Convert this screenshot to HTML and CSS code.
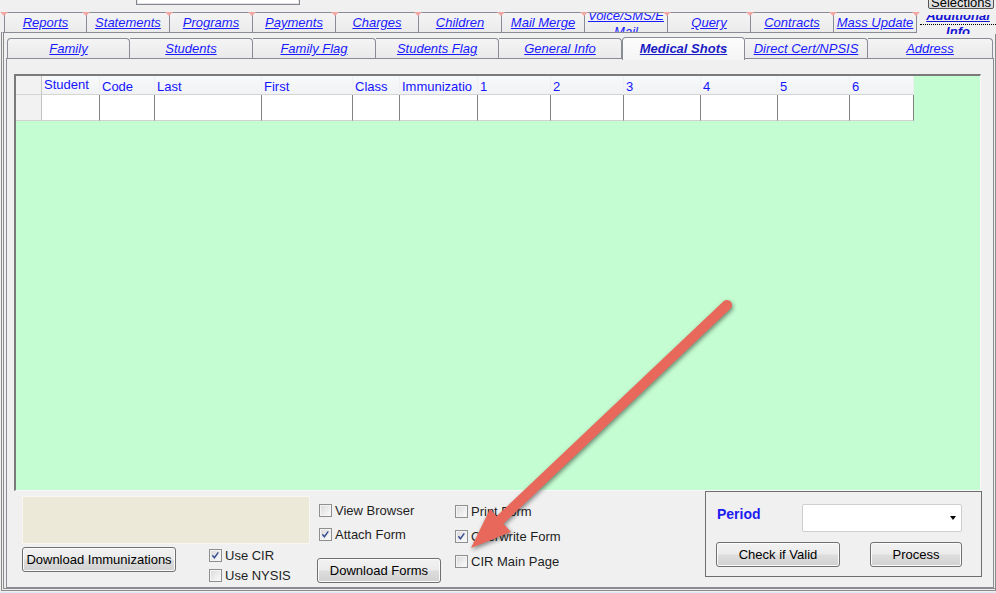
FILE: index.html
```html
<!DOCTYPE html>
<html lang="en">
<head>
    <meta charset="UTF-8">
    <meta name="viewport" content="width=device-width, initial-scale=1.0">
    <title>Medical Shots</title>

    <link rel="stylesheet" href="styles.css">
</head>
<body>

<div class="topbar">
    <div class="search"></div>
    <button class="sel-btn">Selections</button>
</div>

<div class="tabs1">
    <span class="t1 first">Reports</span>
    <span class="t1">Statements</span>
    <span class="t1">Programs</span>
    <span class="t1">Payments</span>
    <span class="t1">Charges</span>
    <span class="t1">Children</span>
    <span class="t1">Mail Merge</span>
    <span class="t1"><span class="clip"><span class="lines">Voice/SMS/E<br>Mail</span></span></span>
    <span class="t1">Query</span>
    <span class="t1">Contracts</span>
    <span class="t1">Mass Update</span>
    <span class="t1 active"><span class="focus"><span class="lines">Additional<br>Info</span></span></span>
</div>

<div class="frame">
    <div class="tabs2">
        <span class="t2 first">Family</span>
        <span class="t2">Students</span>
        <span class="t2">Family Flag</span>
        <span class="t2">Students Flag</span>
        <span class="t2">General Info</span>
        <span class="t2 active">Medical Shots</span>
        <span class="t2">Direct Cert/NPSIS</span>
        <span class="t2 last">Address</span>
    </div>

    <div class="panel">
        <div class="grid-area">
            <div class="grid">
                <div class="hd rh"></div>
                <div class="hd hi">Student</div>
                <div class="hd">Code</div>
                <div class="hd">Last</div>
                <div class="hd">First</div>
                <div class="hd">Class</div>
                <div class="hd">Immunizatio</div>
                <div class="hd">1</div>
                <div class="hd">2</div>
                <div class="hd">3</div>
                <div class="hd">4</div>
                <div class="hd">5</div>
                <div class="hd">6</div>

                <div class="cell rh"></div>
                <div class="cell"></div>
                <div class="cell"></div>
                <div class="cell"></div>
                <div class="cell"></div>
                <div class="cell"></div>
                <div class="cell"></div>
                <div class="cell"></div>
                <div class="cell"></div>
                <div class="cell"></div>
                <div class="cell"></div>
                <div class="cell"></div>
                <div class="cell"></div>
            </div>
        </div>

        <div class="bottom">
            <div class="col-a">
                <div class="memo"></div>
                <div class="col-a-row">
                    <button class="btn btn-imm">Download Immunizations</button>
                    <div class="checks">
                        <label class="chk"><span class="box on"><svg viewBox="0 0 13 13"><path d="M2.8 6.2 L5.2 9.2 L9.8 2.8"/></svg></span>Use CIR</label>
                        <label class="chk"><span class="box"></span>Use NYSIS</label>
                    </div>
                </div>
            </div>

            <div class="col-b">
                <label class="chk"><span class="box"></span>View Browser</label>
                <label class="chk"><span class="box on"><svg viewBox="0 0 13 13"><path d="M2.8 6.2 L5.2 9.2 L9.8 2.8"/></svg></span>Attach Form</label>
                <button class="btn btn-forms">Download Forms</button>
            </div>

            <div class="col-c">
                <label class="chk"><span class="box"></span>Print Form</label>
                <label class="chk"><span class="box on"><svg viewBox="0 0 13 13"><path d="M2.8 6.2 L5.2 9.2 L9.8 2.8"/></svg></span>Overwrite Form</label>
                <label class="chk"><span class="box"></span>CIR Main Page</label>
            </div>

            <div class="groupbox">
                <div class="period-row">
                    <span class="period">Period</span>
                    <div class="combo"><span class="caret"></span></div>
                </div>
                <div class="btn-row">
                    <button class="btn btn-check">Check if Valid</button>
                    <button class="btn btn-process">Process</button>
                </div>
            </div>
        </div>
    </div>
</div>
<div class="status"></div>

<svg class="arrow" width="996" height="593" viewBox="0 0 996 593">
    <line x1="727" y1="305" x2="501" y2="519" stroke="#e8685b" stroke-width="10" stroke-linecap="round"/>
    <polygon points="471,548 511,532 490,509" fill="#e8685b"/>
</svg>

</body>
</html>
```

FILE: styles.css
```css
*{
    padding: 0;
    margin: 0;
    box-sizing: border-box;
}

body{
    position: relative;
    width: 996px;
    height: 593px;
    overflow: hidden;
    background-color: #f0f0f0;
    font-family: "Liberation Sans", Arial, sans-serif;
    font-size: 13px;
    color: #000;
}

/* top strip */
.topbar{
    display: flex;
    align-items: flex-end;
    height: 12px;
    overflow: hidden;
}

.search{
    flex-shrink: 0;
    width: 164px;
    height: 20px;
    margin: 0 0 7px 136px;
    background-color: #fff;
    border: 1px solid #828790;
    box-shadow: inset 0 0 0 1px #e3e3e3;
}

.sel-btn{
    flex-shrink: 0;
    width: 66px;
    height: 22px;
    margin: 0 2px 3px auto;
    font-family: inherit;
    font-size: 13px;
    line-height: 10px;
    padding-top: 9px;
    border: 1px solid #555;
    border-radius: 2px;
    background: linear-gradient(#f2f2f2, #d9d9d9);
}

/* outer tabs */
.tabs1{
    display: flex;
    height: 20px;
    padding-left: 4px;
}

.t1{
    position: relative;
    flex-shrink: 0;
    width: 83px;
    height: 20px;
    border-top: 1px solid #898c95;
    border-right: 1px solid #898c95;
    border-top-right-radius: 3px;
    background: linear-gradient(#f4f4f4, #ebebeb);
    color: #1a1aff;
    font-style: italic;
    text-decoration: underline;
    text-align: center;
    line-height: 19px;
    white-space: nowrap;
}

.t1.first{
    border-left: 1px solid #898c95;
}

.t1::after{
    content: "";
    position: absolute;
    z-index: 2;
    top: -1px;
    right: -4px;
    border-left: 4px solid transparent;
    border-right: 4px solid transparent;
    border-top: 4px solid #f3a7a4;
}

.t1.first::before{
    content: "";
    position: absolute;
    z-index: 2;
    top: -1px;
    left: -5px;
    border-left: 4px solid transparent;
    border-right: 4px solid transparent;
    border-top: 4px solid #f3a7a4;
}

.t1 .clip{
    display: block;
    height: 19px;
    overflow: hidden;
}

.t1 .lines{
    display: block;
    line-height: 16px;
    margin-top: -5px;
}

.t1.active{
    z-index: 1;
    flex: 1;
    width: auto;
    height: 19px;
    margin-top: 3px;
    margin-bottom: -2px;
    border: none;
    background: #f0f0f0;
    overflow: hidden;
    font-weight: bold;
    color: #1414d2;
}

.t1.active::after{
    display: none;
}

.t1.active .focus{
    display: block;
    height: 17px;
    margin-left: 3px;
    border-bottom: 1px dotted #000;
}

.t1.active .lines{
    margin-top: -7px;
}

/* frame round the inner tabs */
.frame{
    width: 995px;
    height: 559px;
    margin-left: 1px;
    padding-top: 5px;
    border-top: 1px solid #898c95;
    border-left: 3px double #8a8a8a;
    border-right: 1px solid #8a8a8a;
    border-bottom: 3px double #8a8a8a;
}

.tabs2{
    display: flex;
    height: 20px;
    padding-left: 3px;
}

.t2{
    position: relative;
    flex-shrink: 0;
    width: 123px;
    height: 20px;
    border-top: 1px solid #898c95;
    border-right: 1px solid #898c95;
    border-top-right-radius: 4px;
    background: linear-gradient(#f4f4f4, #eaeaea);
    color: #1a1aff;
    font-style: italic;
    text-decoration: underline;
    text-align: center;
    line-height: 19px;
    white-space: nowrap;
}

.t2.first{
    border-left: 1px solid #898c95;
    border-top-left-radius: 4px;
}

.t2.last{
    width: 125px;
}

.t2.active{
    z-index: 1;
    height: 23px;
    margin-top: -1px;
    margin-bottom: -2px;
    border-left: 1px solid #898c95;
    border-top-left-radius: 4px;
    background: linear-gradient(#fcfcfc, #f5f5f5);
    font-weight: bold;
    color: #1c1cc4;
    line-height: 21px;
}

.panel{
    width: 988px;
    height: 530px;
    margin-left: 2px;
    border: 1px solid #898c95;
    background-color: #f0f0f0;
}

/* green grid area */
.grid-area{
    width: 967px;
    height: 417px;
    margin: 15px 0 0 7px;
    background-color: #c4fdd1;
    border-top: 2px solid #7a7a7a;
    border-left: 2px solid #7a7a7a;
    border-right: 1px solid #f7f7f7;
    border-bottom: 1px solid #f7f7f7;
}

.grid{
    display: grid;
    grid-template-columns: 26px 58px 55px 107px 91px 47px 78px 73px 73px 77px 77px 72px 64px;
    width: 898px;
}

.hd{
    height: 19px;
    padding: 3px 0 0 2px;
    line-height: 15px;
    white-space: nowrap;
    overflow: hidden;
    color: #1414ff;
    background: linear-gradient(#f8f9fa, #f1f2f4);
    border-right: 1px solid #eef0f2;
    border-bottom: 1px solid #d5d5d5;
}

.hd.hi{
    padding-top: 1px;
}

.cell{
    height: 26px;
    background-color: #fff;
    border-right: 1px solid #828282;
    border-bottom: 1px solid #d2d2d2;
}

.rh{
    background: #f2f2f2;
    border-right: 1px solid #c4c4c4;
}

/* bottom controls */
.bottom{
    display: flex;
    height: 96px;
}

.col-a{
    width: 288px;
    margin-left: 15px;
    padding-top: 5px;
}

.memo{
    height: 48px;
    background-color: #ece9d8;
    border: 1px solid #f7f6f1;
}

.col-a-row{
    display: flex;
    margin-top: 3px;
}

.checks{
    margin: -2px 0 0 33px;
}

.col-b{
    display: flex;
    flex-direction: column;
    gap: 4px;
    margin-left: 7px;
    padding-top: 9px;
}

.col-b .chk{
    padding-left: 2px;
}

.col-c{
    display: flex;
    flex-direction: column;
    gap: 5px;
    margin-left: 14px;
    padding-top: 10px;
}

.chk{
    display: flex;
    align-items: center;
    gap: 3px;
    height: 20px;
    white-space: nowrap;
    color: #1e1e1e;
}

.box{
    flex-shrink: 0;
    width: 13px;
    height: 13px;
    border: 1px solid #8e8f8f;
    background: linear-gradient(135deg, #d9d9d9, #f7f7f7 85%);
    box-shadow: inset 0 0 0 1px #f4f4f4;
}

.box svg{
    display: block;
    width: 11px;
    height: 11px;
}

.box path{
    fill: none;
    stroke: #3a4d93;
    stroke-width: 1.7;
}

.btn{
    height: 25px;
    font-family: inherit;
    font-size: 13px;
    color: #000;
    border: 1px solid #707070;
    border-radius: 3px;
    background: linear-gradient(#f2f2f2 0%, #ebebeb 48%, #dddddd 52%, #d1d1d1 100%);
    box-shadow: inset 0 0 0 1px #fbfbfb;
}

.btn-imm{
    flex-shrink: 0;
    width: 154px;
}

.btn-forms{
    width: 124px;
    margin-top: 10px;
}

.groupbox{
    width: 277px;
    height: 86px;
    margin: 0 11px 0 auto;
    padding: 12px 19px 0 10px;
    border: 1px solid #6e6e6e;
}

.period-row{
    display: flex;
    height: 28px;
}

.period{
    margin: 2px 0 0 1px;
    font-size: 14px;
    font-weight: bold;
    color: #1c1cf0;
}

.combo{
    display: flex;
    align-items: center;
    justify-content: flex-end;
    width: 160px;
    margin-left: auto;
    padding-right: 5px;
    background-color: #fff;
    border: 1px solid #cfcfcf;
    border-radius: 2px;
}

.caret{
    border-left: 3px solid transparent;
    border-right: 3px solid transparent;
    border-top: 4px solid #000;
}

.btn-row{
    display: flex;
    justify-content: space-between;
    margin-top: 10px;
}

.btn-check{
    width: 124px;
}

.btn-process{
    width: 92px;
}

.status{
    height: 2px;
    border-bottom: 1px solid #dce8f4;
}

/* annotation arrow drawn over the form */
.arrow{
    position: absolute;
    left: 0;
    top: 0;
    pointer-events: none;
    filter: drop-shadow(1px 2px 2px rgba(0, 0, 0, 0.45));
}
```
